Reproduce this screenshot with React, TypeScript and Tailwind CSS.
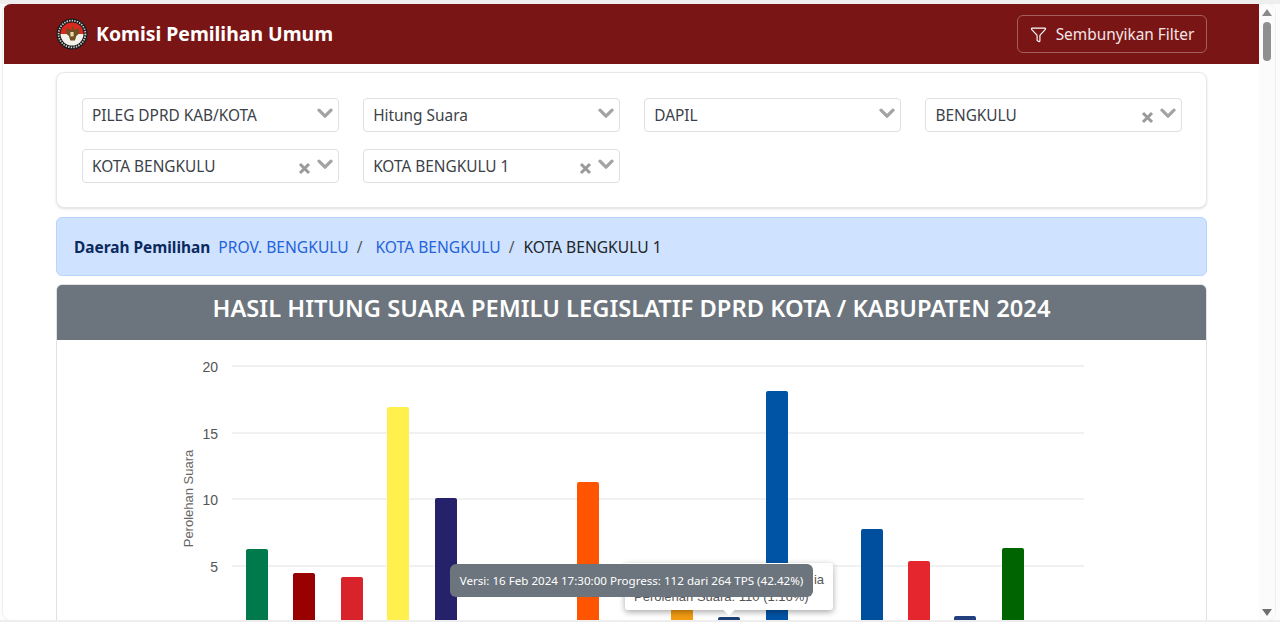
import React from "react";
import { Funnel } from "lucide-react";

const filters = [
  { label: "PILEG DPRD KAB/KOTA", clear: false },
  { label: "Hitung Suara", clear: false },
  { label: "DAPIL", clear: false },
  { label: "BENGKULU", clear: true },
  { label: "KOTA BENGKULU", clear: true },
  { label: "KOTA BENGKULU 1", clear: true },
];

const gridLines = [
  { y: 366, label: "20" },
  { y: 433, label: "15" },
  { y: 499, label: "10" },
  { y: 566, label: "5" },
];

// x and top are page pixels of each bar
const bars = [
  { x: 246, top: 549, color: "#007a4d" },
  { x: 293, top: 573, color: "#990000" },
  { x: 341, top: 577, color: "#d9232a" },
  { x: 387, top: 407, color: "#fff04d" },
  { x: 435, top: 498, color: "#25226b" },
  { x: 577, top: 482, color: "#ff5500" },
  { x: 671, top: 600, color: "#f39c12" },
  { x: 718, top: 617, color: "#1d3f77" },
  { x: 766, top: 391, color: "#0054a6" },
  { x: 861, top: 529, color: "#004f9f" },
  { x: 908, top: 561, color: "#e6262e" },
  { x: 954, top: 616, color: "#22407f" },
  { x: 1002, top: 548, color: "#006400" },
];

function Logo() {
  return (
    <svg width="32" height="32" viewBox="0 0 32 32">
      <circle cx="16" cy="16" r="15.5" fill="#1a1a1a" />
      <circle cx="16" cy="16" r="13.4" fill="none" stroke="#cfcfcf" strokeWidth="1.8" strokeDasharray="1.4 1.2" />
      <path d="M4.5 16a11.5 11.5 0 0 1 23 0z" fill="#d9281e" />
      <path d="M4.5 16a11.5 11.5 0 0 0 23 0z" fill="#f4f1ea" />
      <path d="M16 7.5l1.5 2.2 0 2.6 5.2-2.4.4 5.6-2.8 2.6-1.4 4.4h-4.6l-1.4-4.4-2.8-2.6.4-5.6 5.2 2.4 0-2.6z" fill="#6e4f22" />
      <rect x="14.4" y="14" width="3.2" height="4.4" fill="#e9d9b0" />
    </svg>
  );
}

function Select({ label, clear }: { label: string; clear: boolean }) {
  return (
    <div className="h-[34px] flex items-center justify-between pl-[9px] pr-[5px] bg-white border border-[#dcdfe3] rounded-[4px] text-[15.4px] text-[#3b4148]">
      <span className="pt-[2px]">{label}</span>
      <span className="flex items-center gap-[6px]">
        {clear && (
          <svg width="13" height="13" viewBox="0 0 13 13" className="mt-[5px]">
            <path d="M2 2l9 9M11 2l-9 9" stroke="#9a9a9a" strokeWidth="3" />
          </svg>
        )}
        <svg width="16" height="11" viewBox="0 0 16 11" className="mb-[3px]">
          <path d="M2 2.2l6 6 6-6" fill="none" stroke="#a3a3a3" strokeWidth="3.2" strokeLinecap="round" strokeLinejoin="round" />
        </svg>
      </span>
    </div>
  );
}

function Chart() {
  return (
    <svg width="1149" height="280" viewBox="57 340 1149 280" className="block font-['Liberation_Sans',sans-serif]">
      {gridLines.map((g) => (
        <g key={g.label}>
          <line x1="232" x2="1084" y1={g.y} y2={g.y} stroke="#ececec" strokeWidth="1.5" />
          <text x="218" y={g.y + 6} textAnchor="end" fontSize="14" fill="#555">
            {g.label}
          </text>
        </g>
      ))}
      <text transform="translate(193 498.5) rotate(-90)" textAnchor="middle" fontSize="13" fill="#666">
        Perolehan Suara
      </text>
      {bars.map((b) => (
        <path
          key={b.x}
          d={`M${b.x} 625V${b.top + 2}q0-2 2-2h18q2 0 2 2V625z`}
          fill={b.color}
        />
      ))}
    </svg>
  );
}

export default function App() {
  return (
    <div className="h-screen overflow-hidden bg-[#fcfcfc] border-t-[4px] border-b-[2px] border-[#eeeeee] pr-[5px] pl-[3px] font-['Noto_Sans',sans-serif]">
      <div className="h-full flex bg-white rounded-[8px] overflow-hidden ring-1 ring-[#efefef]">
        <div className="relative flex-1 min-w-0 overflow-hidden pl-[1px]">
          <header className="h-[60px] bg-[#7a1515] flex items-center justify-between pl-[52px] pr-[52px]">
            <div className="flex items-center gap-[8px] text-white text-[19.4px] font-bold">
              <Logo />
              <span>Komisi Pemilihan Umum</span>
            </div>
            <button className="h-[38px] w-[190px] flex items-center justify-center gap-[9px] border border-[#a35f5f] rounded-[6px] text-[#f3e6e6] text-[15.4px]">
              <Funnel size={17} strokeWidth={1.6} className="text-white" />
              <span className="pt-[2px]">Sembunyikan Filter</span>
            </button>
          </header>

          <div className="pl-[52px] pr-[52px] pt-[8px]">
            <div className="h-[136px] bg-white border border-[#e6e7e9] rounded-[8px] shadow-sm pt-[25px] pl-[25px] pr-[24px] grid grid-cols-4 gap-x-[24.5px] gap-y-[17px] content-start">
              {filters.map((f) => (
                <Select key={f.label} label={f.label} clear={f.clear} />
              ))}
            </div>

            <div className="mt-[9px] h-[59px] bg-[#cfe2ff] border border-[#b6d4fe] rounded-[6px] flex items-center pt-[2px] pl-[17px] text-[15.6px]">
              <span className="font-bold text-[15.4px] text-[#0a2a5e] mr-[8px]">Daerah Pemilihan</span>
              <span className="text-[#2563d9]">PROV. BENGKULU</span>
              <span className="text-[#555] mx-[8px]">/</span>
              <span className="text-[#2563d9] ml-[5px]">KOTA BENGKULU</span>
              <span className="text-[#555] ml-[8px] mr-[9px]">/</span>
              <span className="text-[#212529]">KOTA BENGKULU 1</span>
            </div>

            <div className="mt-[8px] border border-[#dfe1e4] rounded-t-[6px] overflow-hidden">
              <div className="h-[55px] pb-[7px] bg-[#6c757d] flex items-center justify-center text-white text-[23.7px] font-semibold">
                HASIL HITUNG SUARA PEMILU LEGISLATIF DPRD KOTA / KABUPATEN 2024
              </div>
              <Chart />
            </div>
          </div>

          {/* tooltips over the chart */}
          <div className="absolute left-[622px] top-[559px] w-[208px] h-[47px] bg-white rounded-[3px] shadow-[0_2px_6px_rgba(0,0,0,0.35)] text-[13px] text-[#555] pt-[8px] leading-[17px] font-['Liberation_Sans',sans-serif]">
            <div className="pr-[9px] text-right">ia</div>
            <div className="pl-[9px]">Perolehan Suara: 110 (1.16%)</div>
            <div className="absolute left-[100px] top-[43px] w-[8px] h-[8px] bg-white rotate-45" />
          </div>
          <div className="absolute left-[447px] top-[560px] w-[363px] h-[33px] bg-[#6c757d] rounded-[6px] flex items-center justify-center text-white text-[11.6px] whitespace-nowrap">
            Versi: 16 Feb 2024 17:30:00 Progress: 112 dari 264 TPS (42.42%)
          </div>
        </div>

        <div className="w-[16px] shrink-0 bg-[#fbfbfb] flex flex-col items-center justify-between pt-[5px] pb-[4px]">
          <div className="flex flex-col items-center gap-[6px]">
            <svg width="10" height="7" viewBox="0 0 10 7"><path d="M5 0l5 7H0z" fill="#8a8a8a" /></svg>
            <div className="w-[8px] h-[39px] bg-[#8f8f8f] rounded-[4px]" />
          </div>
          <svg width="10" height="7" viewBox="0 0 10 7"><path d="M5 7L0 0h10z" fill="#6f6f6f" /></svg>
        </div>
      </div>
    </div>
  );
}
